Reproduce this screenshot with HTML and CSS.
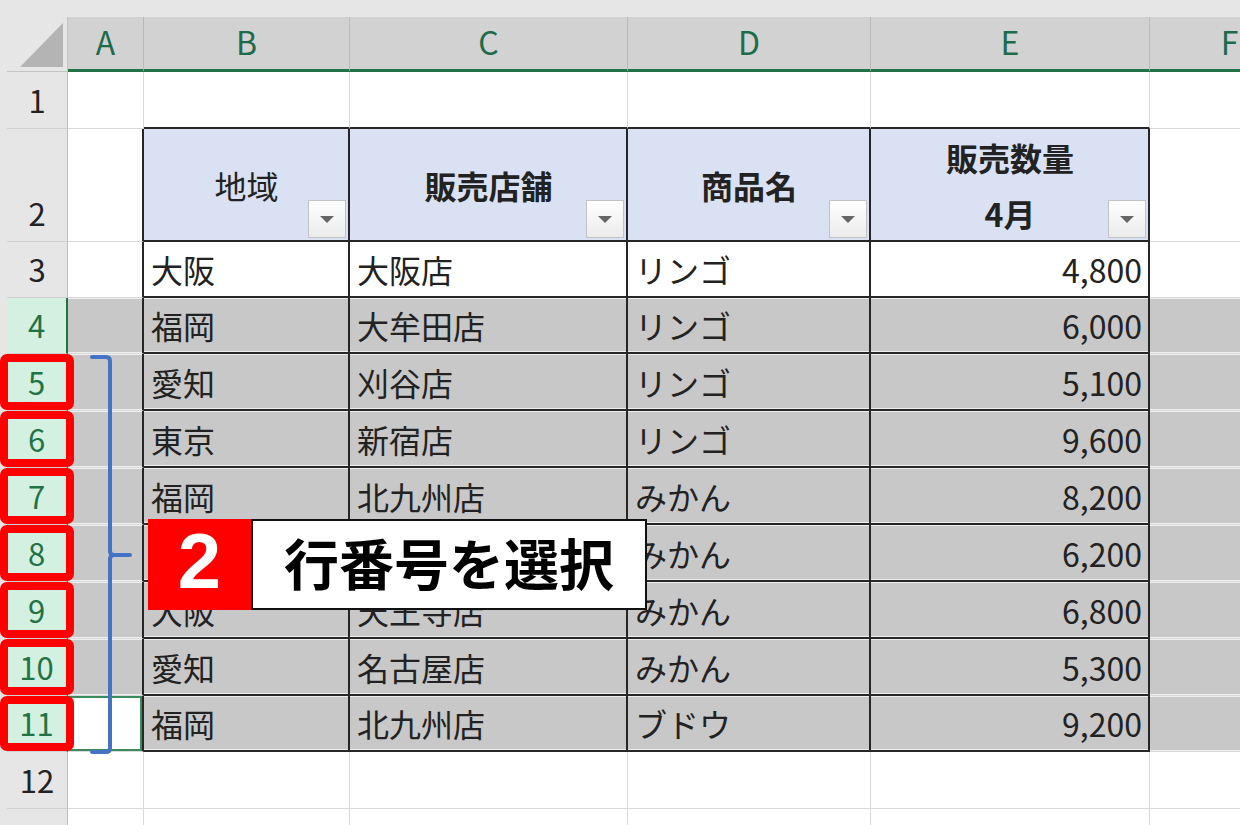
FILE: index.html
```html
<!DOCTYPE html>
<html lang="ja">
<head>
    <meta charset="UTF-8">
    <title>行番号を選択</title>
    <link rel="stylesheet" href="styles.css">
</head>
<body>
    <div class="sheet">
        <!-- column headers -->
        <div class="corner"></div>
        <div class="ch">A</div>
        <div class="ch">B</div>
        <div class="ch">C</div>
        <div class="ch">D</div>
        <div class="ch">E</div>
        <div class="ch">F</div>

        <div class="row">
            <div class="rh">1</div>
            <div class="c"></div>
            <div class="c top"></div>
            <div class="c top"></div>
            <div class="c top"></div>
            <div class="c top"></div>
            <div class="c"></div>
        </div>

        <div class="row">
            <div class="rh">2</div>
            <div class="c edge"></div>
            <div class="c t hd light">地域<span class="filter"></span></div>
            <div class="c t hd">販売店舗<span class="filter"></span></div>
            <div class="c t hd">商品名<span class="filter"></span></div>
            <div class="c t hd">販売数量<br>4月<span class="filter"></span></div>
            <div class="c"></div>
        </div>

        <div class="row">
            <div class="rh">3</div>
            <div class="c edge"></div>
            <div class="c t">大阪</div>
            <div class="c t">大阪店</div>
            <div class="c t">リンゴ</div>
            <div class="c t num">4,800</div>
            <div class="c"></div>
        </div>

        <div class="row sel">
            <div class="rh">4</div>
            <div class="c edge"></div>
            <div class="c t">福岡</div>
            <div class="c t">大牟田店</div>
            <div class="c t">リンゴ</div>
            <div class="c t num">6,000</div>
            <div class="c"></div>
        </div>

        <div class="row sel mark">
            <div class="rh">5</div>
            <div class="c edge"></div>
            <div class="c t">愛知</div>
            <div class="c t">刈谷店</div>
            <div class="c t">リンゴ</div>
            <div class="c t num">5,100</div>
            <div class="c"></div>
        </div>

        <div class="row sel mark">
            <div class="rh">6</div>
            <div class="c edge"></div>
            <div class="c t">東京</div>
            <div class="c t">新宿店</div>
            <div class="c t">リンゴ</div>
            <div class="c t num">9,600</div>
            <div class="c"></div>
        </div>

        <div class="row sel mark">
            <div class="rh">7</div>
            <div class="c edge"></div>
            <div class="c t">福岡</div>
            <div class="c t">北九州店</div>
            <div class="c t">みかん</div>
            <div class="c t num">8,200</div>
            <div class="c"></div>
        </div>

        <div class="row sel mark">
            <div class="rh">8</div>
            <div class="c edge"></div>
            <div class="c t">東京</div>
            <div class="c t">池袋店</div>
            <div class="c t">みかん</div>
            <div class="c t num">6,200</div>
            <div class="c"></div>
        </div>

        <div class="row sel mark">
            <div class="rh">9</div>
            <div class="c edge"></div>
            <div class="c t">大阪</div>
            <div class="c t">天王寺店</div>
            <div class="c t">みかん</div>
            <div class="c t num">6,800</div>
            <div class="c"></div>
        </div>

        <div class="row sel mark">
            <div class="rh">10</div>
            <div class="c edge"></div>
            <div class="c t">愛知</div>
            <div class="c t">名古屋店</div>
            <div class="c t">みかん</div>
            <div class="c t num">5,300</div>
            <div class="c"></div>
        </div>

        <div class="row sel mark">
            <div class="rh">11</div>
            <div class="c edge active"></div>
            <div class="c t">福岡</div>
            <div class="c t">北九州店</div>
            <div class="c t">ブドウ</div>
            <div class="c t num">9,200</div>
            <div class="c"></div>
        </div>

        <div class="row">
            <div class="rh">12</div>
            <div class="c"></div>
            <div class="c"></div>
            <div class="c"></div>
            <div class="c"></div>
            <div class="c"></div>
            <div class="c"></div>
        </div>

        <div class="row">
            <div class="rh">13</div>
            <div class="c"></div>
            <div class="c"></div>
            <div class="c"></div>
            <div class="c"></div>
            <div class="c"></div>
            <div class="c"></div>
        </div>

        <!-- annotation overlays -->
        <svg class="bracket" width="50" height="410" viewBox="0 0 50 410">
            <path d="M2 3 H16 Q20 3 20 7 V197 Q20 201 24 201 H40 M24 201 Q20 201 20 205 V394 Q20 398 16 398 H2"
                  fill="none" stroke="#4472c4" stroke-width="4" stroke-linecap="round"/>
        </svg>

        <div class="callout">
            <div class="badge">2</div>
            <div class="callout-text">行番号を選択</div>
        </div>
    </div>
</body>
</html>
```

FILE: styles.css
```css
* {
    margin: 0;
    padding: 0;
    box-sizing: border-box;
}

body {
    font-family: "Noto Sans CJK JP", "Noto Sans", sans-serif;
    background: #e6e6e6;
    color: #222;
    width: 1240px;
    height: 825px;
    overflow: hidden;
    padding: 17px 0 0 7px;
}

.sheet {
    position: relative;
    display: grid;
    grid-template-columns: 61px 76px 206px 278px 243px 279px 160px;
    grid-template-rows: 55px 57px 113px 56px 56px 57px 57px 57px 57px 57px 57px 56px 57px 57px;
    background: #fff;
}

.row {
    display: contents;
}

/* select-all corner */
.corner {
    position: relative;
    background: #e6e6e6;
    border-right: 1px solid #c4c4c4;
    border-bottom: 1px solid #c4c4c4;
}

.corner::after {
    content: '';
    position: absolute;
    right: 4px;
    bottom: 4px;
    width: 43px;
    height: 44px;
    background: #b4b4b4;
    clip-path: polygon(100% 0, 100% 100%, 0 100%);
}

/* column letters */
.ch {
    background: #d2d2d2;
    border-right: 1px solid #b9b9b9;
    border-bottom: 3px solid #217346;
    color: #1e6b4c;
    font-size: 32px;
    line-height: 1;
    display: flex;
    align-items: center;
    justify-content: center;
    padding-bottom: 4px;
}

/* row numbers */
.rh {
    position: relative;
    background: #e6e6e6;
    border-right: 1px solid #bdbdbd;
    border-bottom: 1px solid #d0d0d0;
    font-size: 31px;
    line-height: 1;
    display: flex;
    align-items: flex-end;
    justify-content: center;
    padding-bottom: 13px;
}

.sel .rh {
    background: #d3f0e0;
    color: #217346;
    border-right: 2px solid #217346;
}

.mark .rh::after {
    content: '';
    position: absolute;
    top: 0;
    bottom: 0;
    left: -7px;
    right: -8px;
    border: 8px solid #ff0000;
    border-radius: 7px;
}

/* cells */
.c {
    border-right: 1px solid #d9d9d9;
    border-bottom: 1px solid #d9d9d9;
    font-size: 32px;
    line-height: 1;
    display: flex;
    align-items: center;
    padding: 0 6px 0 7px;
}

.sel .c {
    background: #c8c8c8;
    box-shadow: inset 0 1px 0 #efefef, inset 0 -1px 0 #efefef;
}

.c.edge {
    border-right: 2px solid #262626;
}

.c.top {
    border-bottom: 2px solid #262626;
}

.c.t {
    border-right: 2px solid #262626;
    border-bottom: 2px solid #262626;
}

.c.num {
    justify-content: flex-end;
}

.c.active {
    background: #fff;
    box-shadow: inset 0 0 0 2px #3b8b5d;
}

/* table header */
.hd {
    position: relative;
    background: #d9e1f2;
    justify-content: center;
    text-align: center;
    font-weight: 700;
    line-height: 56px;
}

.hd.light {
    font-weight: 400;
}

.filter {
    position: absolute;
    right: 2px;
    bottom: 2px;
    width: 38px;
    height: 38px;
    border: 1px solid #c3c3c3;
    background: linear-gradient(#ffffff, #ebebeb);
    display: flex;
    align-items: center;
    justify-content: center;
}

.filter::after {
    content: '';
    border-left: 7px solid transparent;
    border-right: 7px solid transparent;
    border-top: 7px solid #666;
}

/* annotations */
.bracket {
    position: absolute;
    left: 83px;
    top: 337px;
}

.callout {
    position: absolute;
    left: 141px;
    top: 502px;
    display: flex;
}

.badge {
    width: 103px;
    height: 91px;
    background: #ff0000;
    color: #fff;
    font-family: "Liberation Sans", Arial, sans-serif;
    font-weight: 700;
    font-size: 78px;
    line-height: 1;
    display: flex;
    align-items: center;
    justify-content: center;
    padding-bottom: 8px;
}

.callout-text {
    width: 396px;
    height: 91px;
    background: #fff;
    border: 2px solid #111;
    color: #000;
    font-size: 55px;
    font-weight: 700;
    line-height: 1;
    display: flex;
    align-items: center;
    justify-content: center;
    padding-bottom: 6px;
}
```
